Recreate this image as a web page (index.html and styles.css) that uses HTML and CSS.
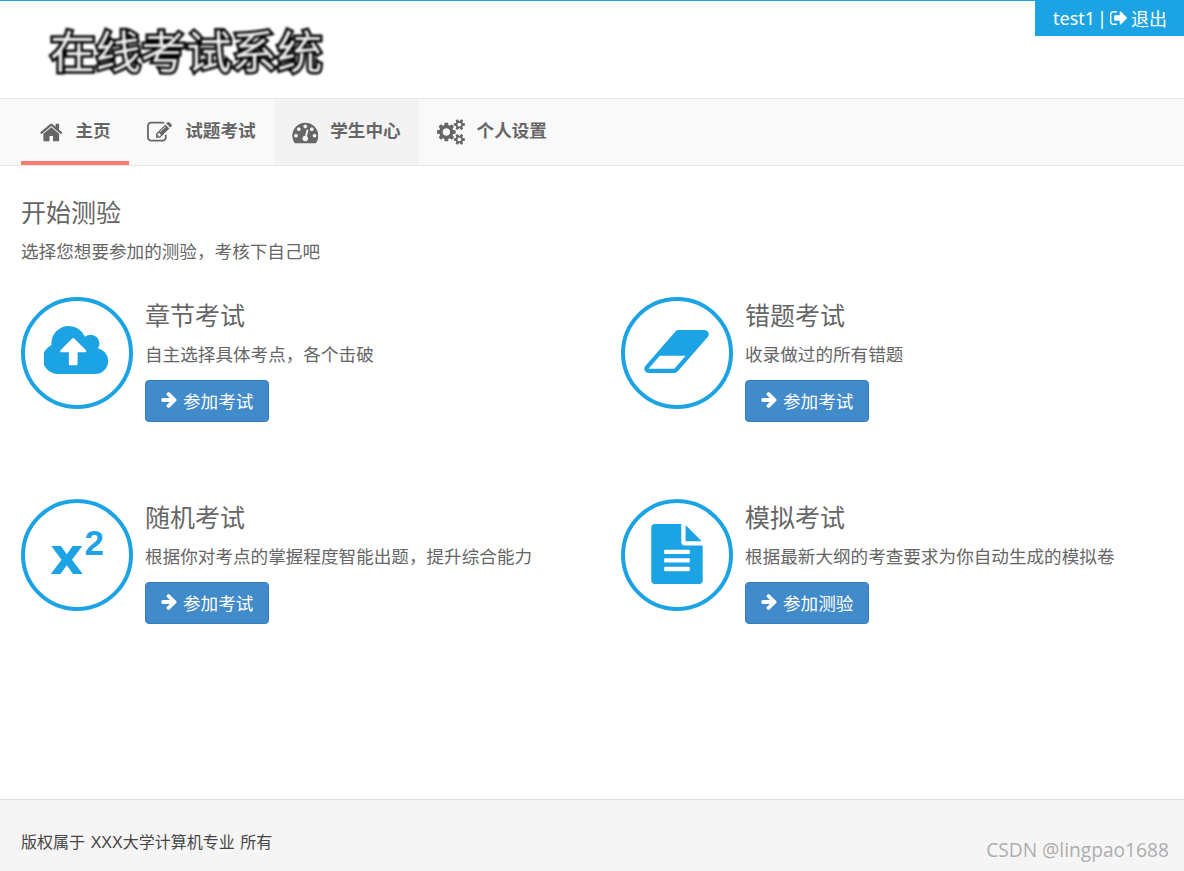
FILE: index.html
```html
<!DOCTYPE html>
<html lang="zh-CN">
<head>
  <meta charset="UTF-8">
  <meta name="viewport" content="width=device-width, initial-scale=1">
  <title>在线考试系统</title>
  <link rel="stylesheet" href="styles.css">
</head>
<body>

  <header class="top">
    <div class="logo">在线考试系统</div>
    <div class="user-box">
      <span>test1</span>
      <span>|</span>
      <svg class="icon-signout" viewBox="64 256 1568 1280"><path d="M704 1440q0 4 1 20t.5 26.5-3 23.5-10 19.5-20.5 6.5h-320q-119 0-203.5-84.5t-84.5-203.5v-704q0-119 84.5-203.5t203.5-84.5h320q13 0 22.5 9.5t9.5 22.5q0 4 1 20t.5 26.5-3 23.5-10 19.5-20.5 6.5h-320q-66 0-113 47t-47 113v704q0 66 47 113t113 47h312l11.5 1 11.5 3 8 5.5 7 9 2 13.5zm928-544q0 26-19 45l-544 544q-19 19-45 19t-45-19-19-45v-288h-448q-26 0-45-19t-19-45v-384q0-26 19-45t45-19h448v-288q0-26 19-45t45-19 45 19l544 544q19 19 19 45z"/></svg>
      <span>退出</span>
    </div>
  </header>

  <nav class="nav">
    <a class="nav-item active">
      <svg class="icon-home" viewBox="0 0 1792 1792"><path d="M1472 992v480q0 26-19 45t-45 19h-384v-384h-256v384h-384q-26 0-45-19t-19-45v-480q0-1 .5-3t.5-3l575-474 575 474q1 2 1 6zm223-69l-62 74q-8 9-21 11h-3q-13 0-21-7l-692-577-692 577q-12 8-24 7-13-2-21-11l-62-74q-8-10-7-23.5t11-21.5l719-599q32-26 76-26t76 26l244 204v-195q0-14 9-23t23-9h192q14 0 23 9t9 23v408l219 182q10 8 11 21.5t-7 23.5z"/></svg>
      <span>主页</span>
    </a>
    <a class="nav-item">
      <svg class="icon-pencil" viewBox="0 0 1856 1792"><path d="M888 1184l116-116-152-152-116 116v56h96v96h56zm440-720q-16-16-33 1l-350 350q-17 17-1 33t33-1l350-350q17-17 1-33zm80 594v190q0 119-84.5 203.5t-203.5 84.5h-832q-119 0-203.5-84.5t-84.5-203.5v-832q0-119 84.5-203.5t203.5-84.5h832q63 0 117 25 15 7 18 23 3 17-9 29l-49 49q-14 14-32 8-23-6-45-6h-832q-66 0-113 47t-47 113v832q0 66 47 113t113 47h832q66 0 113-47t47-113v-126q0-13 9-22l64-64q15-15 35-7t20 29zm-96-738l288 288-672 672h-288v-288zm444 132l-92 92-288-288 92-92q28-28 68-28t68 28l152 152q28 28 28 68t-28 68z"/></svg>
      <span>试题考试</span>
    </a>
    <a class="nav-item hover">
      <svg class="icon-gauge" viewBox="0 0 1792 1792"><path d="M384 1152q0-53-37.5-90.5t-90.5-37.5-90.5 37.5-37.5 90.5 37.5 90.5 90.5 37.5 90.5-37.5 37.5-90.5zm192-448q0-53-37.5-90.5t-90.5-37.5-90.5 37.5-37.5 90.5 37.5 90.5 90.5 37.5 90.5-37.5 37.5-90.5zm428 481l101-382q6-26-7.5-48.5t-38.5-29.5-48 6.5-30 39.5l-101 382q-60 5-107 43.5t-63 98.5q-20 77 20 146t117 89 146-20 89-117q16-60-6-117t-72-91zm660-33q0-53-37.5-90.5t-90.5-37.5-90.5 37.5-37.5 90.5 37.5 90.5 90.5 37.5 90.5-37.5 37.5-90.5zm-640-640q0-53-37.5-90.5t-90.5-37.5-90.5 37.5-37.5 90.5 37.5 90.5 90.5 37.5 90.5-37.5 37.5-90.5zm448 192q0-53-37.5-90.5t-90.5-37.5-90.5 37.5-37.5 90.5 37.5 90.5 90.5 37.5 90.5-37.5 37.5-90.5zm320 448q0 261-141 483-19 29-54 29h-1402q-35 0-54-29-141-221-141-483 0-182 71-348t191-286 286-191 348-71 348 71 286 191 191 286 71 348z"/></svg>
      <span>学生中心</span>
    </a>
    <a class="nav-item">
      <svg class="icon-cogs" viewBox="0 0 1920 1792"><path d="M896 896q0-106-75-181t-181-75-181 75-75 181 75 181 181 75 181-75 75-181zm768 512q0-52-38-90t-90-38-90 38-38 90q0 53 37.5 90.5t90.5 37.5 90.5-37.5 37.5-90.5zm0-1024q0-52-38-90t-90-38-90 38-38 90q0 53 37.5 90.5t90.5 37.5 90.5-37.5 37.5-90.5zm-384 421v185q0 10-7 19.5t-16 10.5l-155 24q-11 35-32 76 34 48 90 115 7 11 7 20 0 12-7 19-23 30-82.5 89.5t-78.5 59.5q-11 0-21-7l-115-90q-37 19-77 31-11 108-23 155-7 24-30 24h-186q-11 0-20-7.5t-10-17.5l-23-153q-34-10-75-31l-118 89q-7 7-20 7-11 0-21-8-144-133-144-160 0-9 7-19 10-14 41-53t47-61q-23-44-35-82l-152-24q-10-1-17-9.5t-7-19.5v-185q0-10 7-19.5t16-10.5l155-24q11-35 32-76-34-48-90-115-7-11-7-20 0-12 7-20 22-30 82-89t79-59q11 0 21 7l115 90q34-18 77-32 11-108 23-154 7-24 30-24h186q11 0 20 7.5t10 17.5l23 153q34 10 75 31l118-89q8-7 20-7 11 0 21 8 144 133 144 160 0 8-7 19-12 16-42 54t-45 60q23 48 34 82l152 23q10 2 17 10.5t7 19.5zm640 533v140q0 16-149 31-12 27-30 52 51 113 51 138 0 4-4 7-122 71-124 71-8 0-46-47t-52-68q-20 2-30 2t-30-2q-14 21-52 68t-46 47q-2 0-124-71-4-3-4-7 0-25 51-138-18-25-30-52-149-15-149-31v-140q0-16 149-31 13-29 30-52-51-113-51-138 0-4 4-7 4-2 35-20t59-34 30-16q8 0 46 46.5t52 67.5q20-2 30-2t30 2q51-71 92-112l6-2q4 0 124 70 4 3 4 7 0 25-51 138 17 23 30 52 149 15 149 31zm0-1024v140q0 16-149 31-12 27-30 52 51 113 51 138 0 4-4 7-122 71-124 71-8 0-46-47t-52-68q-20 2-30 2t-30-2q-14 21-52 68t-46 47q-2 0-124-71-4-3-4-7 0-25 51-138-18-25-30-52-149-15-149-31v-140q0-16 149-31 13-29 30-52-51-113-51-138 0-4 4-7 4-2 35-20t59-34 30-16q8 0 46 46.5t52 67.5q20-2 30-2t30 2q51-71 92-112l6-2q4 0 124 70 4 3 4 7 0 25-51 138 17 23 30 52 149 15 149 31z"/></svg>
      <span>个人设置</span>
    </a>
  </nav>

  <main class="content">
    <h1 class="page-title">开始测验</h1>
    <p class="page-sub">选择您想要参加的测验，考核下自己吧</p>

    <div class="exam-grid">
      <div class="exam">
        <div class="circle">
          <svg class="icon-cloud" viewBox="0 128 1856 1408"><path d="M1216 864q0-14-9-23l-352-352q-9-9-23-9t-23 9l-351 351q-10 12-10 24 0 14 9 23t23 9h224v352q0 13 9.5 22.5t22.5 9.5h192q13 0 22.5-9.5t9.5-22.5v-352h224q13 0 22.5-9.5t9.5-22.5zm640 288q0 159-112.5 271.5t-271.5 112.5h-1088q-185 0-316.5-131.5t-131.5-316.5q0-130 70-240t188-165q-2-30-2-43 0-212 150-362t362-150q156 0 285.5 87t188.5 231q71-62 166-62 106 0 181 75t75 181q0 76-41 138 130 31 213.5 135.5t83.5 238.5z"/></svg>
        </div>
        <div class="exam-body">
          <h2 class="exam-title">章节考试</h2>
          <p class="exam-desc">自主选择具体考点，各个击破</p>
          <a class="btn"><svg class="icon-arrow" viewBox="128 181 1472 1558"><path d="M1600 960q0 54-37 91l-651 651q-39 37-91 37-51 0-90-37l-75-75q-38-38-38-91t38-91l293-293h-704q-52 0-84.5-37.5t-32.5-90.5v-128q0-53 32.5-90.5t84.5-37.5h704l-293-294q-38-36-38-90t38-90l75-75q38-38 90-38 53 0 91 38l651 651q37 35 37 90z"/></svg>参加考试</a>
        </div>
      </div>

      <div class="exam">
        <div class="circle">
          <svg class="icon-eraser" viewBox="64 256 1920 1280"><path d="M960 1408l336-384h-768l-336 384h768zm1013-1077q15 34 9.5 71.5t-30.5 65.5l-896 1024q-38 44-96 44h-768q-38 0-69.5-20.5t-47.5-54.5q-15-34-9.5-71.5t30.5-65.5l896-1024q38-44 96-44h768q38 0 69.5 20.5t47.5 54.5z"/></svg>
        </div>
        <div class="exam-body">
          <h2 class="exam-title">错题考试</h2>
          <p class="exam-desc">收录做过的所有错题</p>
          <a class="btn"><svg class="icon-arrow" viewBox="128 181 1472 1558"><path d="M1600 960q0 54-37 91l-651 651q-39 37-91 37-51 0-90-37l-75-75q-38-38-38-91t38-91l293-293h-704q-52 0-84.5-37.5t-32.5-90.5v-128q0-53 32.5-90.5t84.5-37.5h704l-293-294q-38-36-38-90t38-90l75-75q38-38 90-38 53 0 91 38l651 651q37 35 37 90z"/></svg>参加考试</a>
        </div>
      </div>

      <div class="exam">
        <div class="circle">
          <div class="superscript"><span class="sup-x">x</span><span class="sup-two">2</span></div>
        </div>
        <div class="exam-body">
          <h2 class="exam-title">随机考试</h2>
          <p class="exam-desc">根据你对考点的掌握程度智能出题，提升综合能力</p>
          <a class="btn"><svg class="icon-arrow" viewBox="128 181 1472 1558"><path d="M1600 960q0 54-37 91l-651 651q-39 37-91 37-51 0-90-37l-75-75q-38-38-38-91t38-91l293-293h-704q-52 0-84.5-37.5t-32.5-90.5v-128q0-53 32.5-90.5t84.5-37.5h704l-293-294q-38-36-38-90t38-90l75-75q38-38 90-38 53 0 91 38l651 651q37 35 37 90z"/></svg>参加考试</a>
        </div>
      </div>

      <div class="exam">
        <div class="circle">
          <svg class="icon-file" viewBox="128 0 1536 1792"><path d="M1596 476q14 14 28 36h-472v-472q22 14 36 28zm-476 164h544v1056q0 40-28 68t-68 28h-1344q-40 0-68-28t-28-68v-1600q0-40 28-68t68-28h800v544q0 40 28 68t68 28zm160 736v-64q0-14-9-23t-23-9h-704q-14 0-23 9t-9 23v64q0 14 9 23t23 9h704q14 0 23-9t9-23zm0-256v-64q0-14-9-23t-23-9h-704q-14 0-23 9t-9 23v64q0 14 9 23t23 9h704q14 0 23-9t9-23zm0-256v-64q0-14-9-23t-23-9h-704q-14 0-23 9t-9 23v64q0 14 9 23t23 9h704q14 0 23-9t9-23z"/></svg>
        </div>
        <div class="exam-body">
          <h2 class="exam-title">模拟考试</h2>
          <p class="exam-desc">根据最新大纲的考查要求为你自动生成的模拟卷</p>
          <a class="btn"><svg class="icon-arrow" viewBox="128 181 1472 1558"><path d="M1600 960q0 54-37 91l-651 651q-39 37-91 37-51 0-90-37l-75-75q-38-38-38-91t38-91l293-293h-704q-52 0-84.5-37.5t-32.5-90.5v-128q0-53 32.5-90.5t84.5-37.5h704l-293-294q-38-36-38-90t38-90l75-75q38-38 90-38 53 0 91 38l651 651q37 35 37 90z"/></svg>参加测验</a>
        </div>
      </div>
    </div>
  </main>

  <footer class="footer">版权属于 XXX大学计算机专业 所有</footer>
  <div class="watermark">CSDN @lingpao1688</div>

</body>
</html>
```

FILE: styles.css
```css
body {
  margin: 0;
  min-height: 100vh;
  display: flex;
  flex-direction: column;
  box-sizing: border-box;
  border-top: 1px solid #1ca3e4;
  background: #fff;
  color: #666;
  font-family: "Noto Sans", "Noto Sans CJK SC", sans-serif;
  overflow: hidden;
}

svg {
  fill: currentColor;
  flex: none;
}

.top {
  height: 97px;
  display: flex;
  align-items: flex-start;
  justify-content: space-between;
  border-bottom: 1px solid #e7e7e7;
}

.logo {
  margin: 20px 0 0 50px;
  font-size: 45.4px;
  line-height: 60px;
  color: #eee;
  -webkit-text-stroke: 5px #000;
  paint-order: stroke fill;
  filter: blur(0.8px);
}

.user-box {
  width: 149px;
  height: 35px;
  box-sizing: border-box;
  padding: 0 0 2px 18px;
  display: flex;
  align-items: center;
  gap: 2px;
  background: #1ca3e4;
  color: #fff;
  font-size: 18px;
}

.icon-signout {
  width: 17px;
  height: 14px;
  margin: 0 2px 0 1px;
}

.nav {
  height: 66px;
  display: flex;
  padding-left: 21px;
  background: #f9f9f9;
  border-bottom: 1px solid #e7e7e7;
}

.nav-item {
  display: flex;
  align-items: center;
  gap: 12px;
  padding: 0 18px;
  font-size: 17.6px;
  font-weight: 700;
  color: #666;
}

.nav-item span {
  margin-bottom: 6px;
}

.nav-item.active {
  box-sizing: border-box;
  border-bottom: 4px solid #ff7b72;
  padding: 4px 18.5px 0 18px;
}

.nav-item.hover {
  background: #f3f3f3;
}

.icon-home {
  width: 24.5px;
  height: 25px;
}

.icon-pencil {
  width: 26px;
  height: 25px;
}

.icon-gauge {
  width: 26.6px;
  height: 26px;
}

.icon-cogs {
  width: 28px;
  height: 26px;
}

.content {
  flex: 1;
  padding: 0 21px;
}

.page-title {
  margin: 28px 0 0;
  font-size: 25px;
  line-height: 36px;
  font-weight: 400;
  color: #666;
}

.page-sub {
  margin: 8px 0 0;
  font-size: 17.6px;
  line-height: 26px;
}

.exam-grid {
  display: grid;
  grid-template-columns: 600px 542px;
  grid-auto-rows: 202px;
  margin-top: 33px;
}

.exam {
  display: flex;
  gap: 12px;
}

.circle {
  box-sizing: border-box;
  width: 112px;
  height: 112px;
  display: flex;
  align-items: center;
  justify-content: center;
  border: 4px solid #1ca3e4;
  border-radius: 50%;
  color: #1ca3e4;
  flex: none;
}

.icon-cloud {
  width: 65px;
  height: 48px;
  margin: 0 2px 6px 0;
}

.icon-eraser {
  width: 65px;
  height: 43px;
  margin: 0 2px 4px 0;
}

.icon-file {
  width: 52px;
  height: 60px;
  margin-bottom: 2px;
}

.superscript {
  display: flex;
  align-items: flex-start;
  font-weight: 700;
  line-height: 1;
}

.sup-x {
  font-family: "DejaVu Sans", sans-serif;
  font-size: 52px;
  margin-top: 2px;
}

.sup-two {
  font-family: "Liberation Sans", sans-serif;
  font-size: 35px;
  margin: -3px 0 0 1px;
}

.exam-title {
  margin: 0;
  font-size: 25px;
  line-height: 36px;
  font-weight: 400;
  color: #666;
}

.exam-desc {
  margin: 8px 0 0;
  font-size: 17.6px;
  line-height: 26px;
}

.btn {
  box-sizing: border-box;
  width: 124px;
  height: 42px;
  margin-top: 13px;
  display: flex;
  align-items: center;
  gap: 6px;
  padding: 0 0 2px 15px;
  background: #428bca;
  border: 1px solid #357ebd;
  border-radius: 4px;
  color: #fff;
  font-size: 17.6px;
}

.icon-arrow {
  width: 16px;
  height: 16px;
}

.footer {
  height: 72px;
  display: flex;
  align-items: center;
  padding: 10px 21px 0;
  box-sizing: border-box;
  background: #f5f5f5;
  border-top: 1px solid #ddd;
  font-family: "Liberation Sans", "Noto Sans CJK SC", sans-serif;
  font-size: 16px;
  word-spacing: 1.2px;
  color: #444;
}

.watermark {
  position: absolute;
  right: 15px;
  bottom: 8px;
  font-family: "Open Sans", sans-serif;
  font-size: 19.2px;
  color: rgba(130, 130, 130, 0.65);
}
```
